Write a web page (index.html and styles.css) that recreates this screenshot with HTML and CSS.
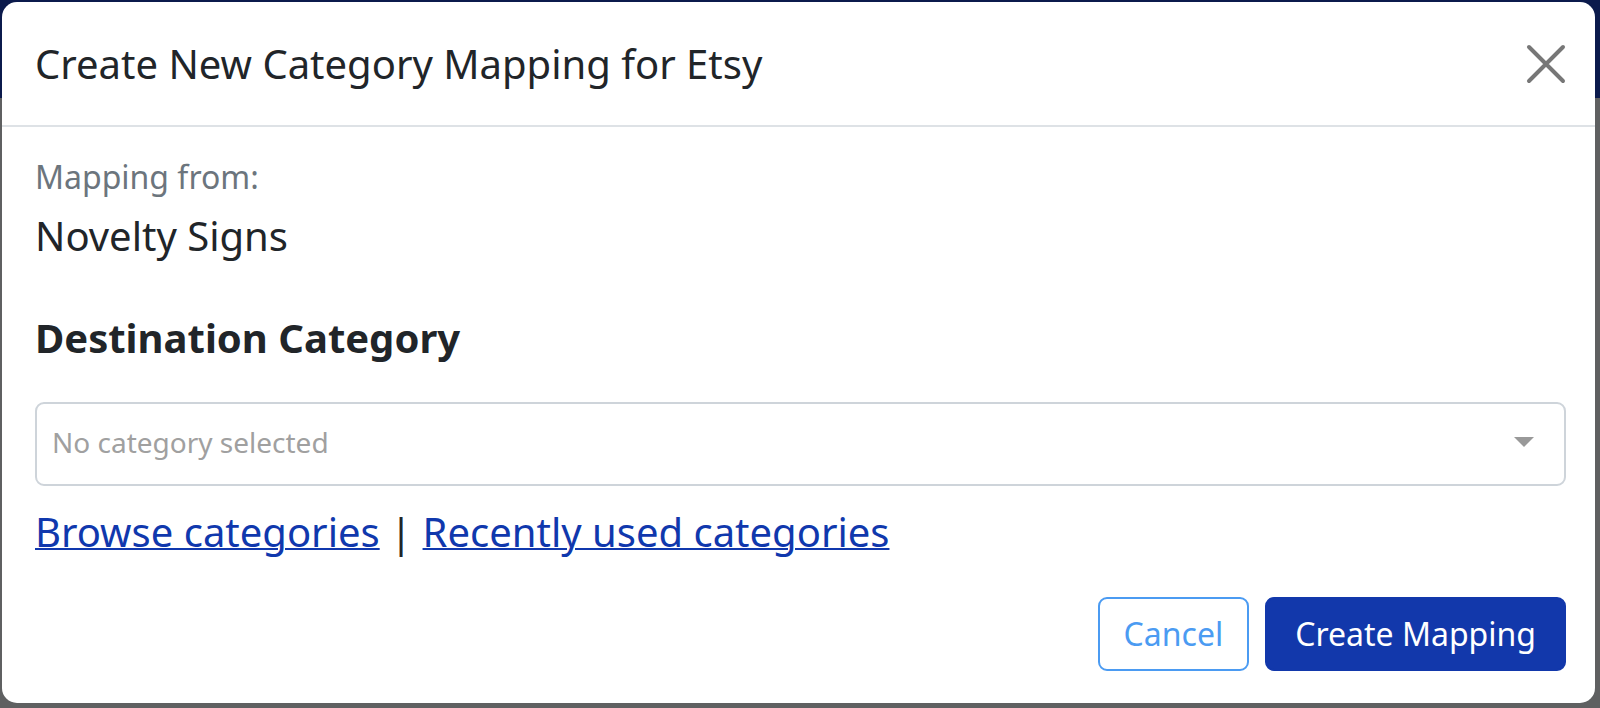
FILE: index.html
```html
<!DOCTYPE html>
<html lang="en">
<head>
    <meta charset="UTF-8">
    <meta name="viewport" content="width=device-width, initial-scale=1.0">
    <title>Create New Category Mapping</title>
    <link rel="stylesheet" href="styles.css">
</head>
<body>

    <div class="modal">
        <div class="modal-header">
            <h5 class="modal-title">Create New Category Mapping for Etsy</h5>
            <button class="close-btn" aria-label="Close">
                <svg width="40" height="40" viewBox="0 0 40 40">
                    <path d="M3 3 L37 37 M37 3 L3 37" stroke="#777" stroke-width="4" stroke-linecap="round" fill="none"/>
                </svg>
            </button>
        </div>

        <div class="modal-body">
            <div class="label">Mapping from:</div>
            <div class="source-name">Novelty Signs</div>

            <h4 class="section-title">Destination Category</h4>

            <div class="category-select">
                <span class="placeholder">No category selected</span>
                <span class="caret"></span>
            </div>

            <div class="links">
                <a href="#">Browse categories</a>
                <span class="divider">|</span>
                <a href="#">Recently used categories</a>
            </div>

            <div class="modal-footer">
                <button class="btn btn-outline">Cancel</button>
                <button class="btn btn-primary">Create Mapping</button>
            </div>
        </div>
    </div>

</body>
</html>
```

FILE: styles.css
```css
body {
    margin: 0;
    height: 708px;
    overflow: hidden;
    font-family: "Noto Sans", "Open Sans", sans-serif;
    color: #212529;
    background: linear-gradient(#0b1a4c 0, #0b1a4c 98px, #5f6061 98px);
}
.modal {
    margin: 2px 5px 0 2px;
    height: 701px;
    background: white;
    border-radius: 15px;
    display: flex;
    flex-direction: column;
}
.modal-header {
    display: flex;
    align-items: center;
    justify-content: space-between;
    padding: 32px 29px 31px 33px;
    border-bottom: 2px solid #dee2e6;
}
.modal-title {
    margin: 0;
    font-size: 40px;
    font-weight: 400;
    line-height: 60px;
}
.close-btn {
    border: none;
    background: none;
    padding: 0;
    width: 40px;
    height: 40px;
    cursor: pointer;
}
.close-btn svg {
    display: block;
}
.modal-body {
    flex: 1;
    display: flex;
    flex-direction: column;
    padding: 26px 29px 32px 33px;
}
.label {
    font-size: 32px;
    line-height: 48px;
    color: #6c757d;
}
.source-name {
    margin-top: 5px;
    font-size: 40px;
    line-height: 60px;
}
.section-title {
    margin: 42px 0 0;
    font-size: 40px;
    font-weight: 700;
    line-height: 60px;
}
.category-select {
    margin-top: 34px;
    height: 84px;
    box-sizing: border-box;
    border: 2px solid #ced4da;
    border-radius: 9px;
    display: flex;
    align-items: center;
    justify-content: space-between;
    padding: 0 30px 4px 15px;
}
.placeholder {
    font-size: 28px;
    line-height: 42px;
    color: #a0a0a0;
}
.caret {
    width: 0;
    height: 0;
    border-left: 10px solid transparent;
    border-right: 10px solid transparent;
    border-top: 10px solid #999;
}
.links {
    margin-top: 16px;
    font-size: 40px;
    line-height: 60px;
}
.links a {
    color: #1038ad;
    text-decoration: underline;
    text-decoration-thickness: 2px;
}
.modal-footer {
    margin-top: auto;
    display: flex;
    justify-content: flex-end;
    gap: 16px;
}
.btn {
    font-family: inherit;
    font-size: 32px;
    line-height: 48px;
    height: 74px;
    border-radius: 9px;
    cursor: pointer;
}
.btn-outline {
    padding: 0 24px;
    background: white;
    color: #4b9bf2;
    border: 2px solid #4b9bf2;
}
.btn-primary {
    padding: 0 28px;
    background-color: #1238ab;
    color: white;
    border: 2px solid #1238ab;
}
```
